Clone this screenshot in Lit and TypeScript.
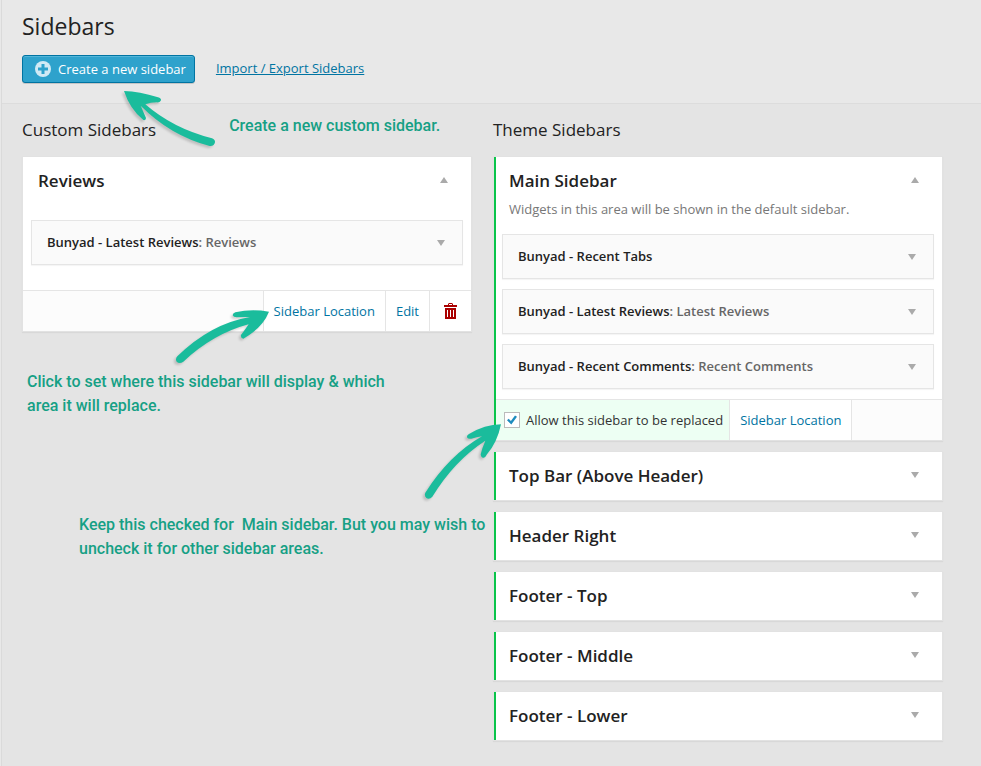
import { LitElement, html, css, svg, nothing } from "lit";
import { customElement, state } from "lit/decorators.js";

interface Widget {
  name: string;
  title?: string;
}

interface Panel {
  id: string;
  title: string;
  custom?: boolean;
  description?: string;
  widgets: Widget[];
}

const customPanels: Panel[] = [
  {
    id: "reviews",
    title: "Reviews",
    custom: true,
    widgets: [{ name: "Bunyad - Latest Reviews", title: "Reviews" }],
  },
];

const themePanels: Panel[] = [
  {
    id: "main",
    title: "Main Sidebar",
    description: "Widgets in this area will be shown in the default sidebar.",
    widgets: [
      { name: "Bunyad - Recent Tabs" },
      { name: "Bunyad - Latest Reviews", title: "Latest Reviews" },
      { name: "Bunyad - Recent Comments", title: "Recent Comments" },
    ],
  },
  { id: "top-bar", title: "Top Bar (Above Header)", widgets: [] },
  { id: "header-right", title: "Header Right", widgets: [] },
  { id: "footer-top", title: "Footer - Top", widgets: [] },
  { id: "footer-middle", title: "Footer - Middle", widgets: [] },
  { id: "footer-lower", title: "Footer - Lower", widgets: [] },
];

const arrowCreate = svg`<path d="M42 33 Q88 34 144 52 Q154 55 153 61 Q151 68 141 67 Q122 67 106 73 Q190 146 306 175 Q316 179 315 187 Q313 199 299 198 Q180 166 92 77 Q98 90 108 114 Q108 122 100 120 Q60 88 42 33Z"/>`;
const arrowLocation = svg`<path d="M297 80 Q244 71 196 82 Q188 85 188 91 Q190 97 200 97 Q222 95 240 96 Q122 116 22 214 Q15 222 20 230 Q28 238 40 230 Q130 146 236 118 Q224 136 213 150 Q211 160 220 161 Q278 128 297 80Z"/>`;
const arrowAllow = svg`<path d="M273 88 Q224 89 177 117 Q170 121 171 127 Q174 133 184 131 Q200 126 216 124 Q118 180 46 293 Q42 302 49 309 Q58 315 67 305 Q134 196 226 137 Q216 160 212 178 Q213 189 221 188 Q227 187 231 178 Q262 142 273 88Z"/>`;

@customElement("app-root")
export class AppRoot extends LitElement {
  @state() private open: Set<string> = new Set(["reviews", "main"]);

  static styles = css`
    :host {
      display: block;
      border-left: 1px solid #e8e8e8;
      color: #222;
      font: 13px/20px "Open Sans", sans-serif;
    }
    * {
      box-sizing: border-box;
    }
    h1,
    h2,
    h3,
    p {
      margin: 0;
    }
    a {
      color: #0074a2;
      text-decoration: none;
    }
    button {
      font: inherit;
      cursor: pointer;
    }
    .page {
      min-height: 100vh;
      border-left: 1px solid #dadada;
      background: #e4e4e4;
    }
    .header {
      padding: 10px 38px 20px 20px;
      background: #e8e8e8;
      border-bottom: 1px solid #dcdcdc;
    }
    .page-title {
      font-size: 23px;
      line-height: 32px;
      font-weight: 400;
    }
    .actions {
      display: flex;
      align-items: center;
      gap: 21px;
      margin-top: 13px;
    }
    .create {
      display: flex;
      align-items: center;
      gap: 7px;
      height: 28px;
      padding: 0 8px 0 12px;
      border: 1px solid #0074a2;
      border-radius: 3px;
      background: #2ea2cc;
      color: #fff;
      box-shadow: inset 0 1px 0 rgba(120, 200, 230, 0.5), 0 1px 0 rgba(0, 0, 0, 0.15);
    }
    .create svg {
      width: 16px;
      height: 16px;
    }
    .import {
      padding-bottom: 2px;
      text-decoration: underline;
    }
    .columns {
      display: grid;
      grid-template-columns: 1fr 1fr;
      gap: 21px;
      padding: 14px 38px 24px 20px;
    }
    .column {
      position: relative;
      min-width: 0;
    }
    .column-head {
      display: flex;
      gap: 73px;
      margin-bottom: 14px;
    }
    .column-title {
      font-size: 17px;
      line-height: 24px;
      font-weight: 400;
      white-space: nowrap;
    }
    .panels {
      display: flex;
      flex-direction: column;
      gap: 10px;
    }
    .panel {
      position: relative;
      border: 1px solid #e2e2e2;
      background: #fff;
      box-shadow: 0 1px 1px rgba(0, 0, 0, 0.05);
    }
    .theme::before {
      content: "";
      position: absolute;
      inset: 0 auto 0 0;
      width: 2px;
      background: #0ac44a;
    }
    .panel-head {
      display: grid;
      grid-template-columns: 1fr auto;
      row-gap: 8px;
      padding: 14px 15px;
    }
    .described {
      padding-bottom: 0;
    }
    .panel-title {
      font-size: 17px;
      line-height: 20px;
      font-weight: 600;
    }
    .description {
      grid-column: 1 / -1;
      color: #777;
    }
    .toggle {
      display: flex;
      align-items: center;
      justify-content: center;
      height: 18px;
      width: 24px;
      padding: 0;
      border: 0;
      background: none;
    }
    .toggle svg {
      width: 8px;
      height: 6px;
      fill: #aaa;
    }
    .flip {
      transform: rotate(180deg);
    }
    .panel-body {
      display: flex;
      flex-direction: column;
      gap: 10px;
      padding: 15px 8px 10px;
    }
    .roomy {
      padding-bottom: 25px;
    }
    .widget {
      display: flex;
      align-items: center;
      justify-content: space-between;
      height: 45px;
      padding: 0 9px 0 15px;
      border: 1px solid #e5e5e5;
      background: #fafafa;
      box-shadow: 0 1px 1px rgba(0, 0, 0, 0.04);
      font-weight: 600;
      color: #666;
    }
    .widget-label {
      padding-bottom: 2px;
    }
    .widget-name {
      color: #222;
    }
    .footer {
      display: flex;
      height: 41px;
      border-top: 1px solid #e5e5e5;
      background: #fcfcfc;
    }
    .end {
      justify-content: flex-end;
    }
    .cell {
      display: flex;
      align-items: center;
      padding: 0 10px;
      border: 0 solid #e5e5e5;
      background: #fff;
    }
    .end .cell {
      border-left-width: 1px;
    }
    .start .cell {
      border-right-width: 1px;
    }
    .end .remove {
      padding: 0 14px;
    }
    .remove svg {
      width: 13px;
      height: 16px;
    }
    .start .allow {
      gap: 6px;
      padding-right: 6px;
      background: #edfff3;
      color: #333;
    }
    .check {
      appearance: none;
      display: grid;
      place-items: center;
      width: 16px;
      height: 16px;
      margin: 0;
      border: 1px solid #bbb;
      background: #fff;
    }
    .check:checked::before {
      content: "";
      width: 10px;
      height: 10px;
      background: #1e8cbe;
      clip-path: polygon(0 52%, 17% 37%, 39% 60%, 80% 5%, 100% 18%, 43% 95%);
    }
    .note {
      color: #16a085;
      font: 500 16px/24px Roboto, sans-serif;
      white-space: pre;
    }
    .heading-note {
      margin-top: -4px;
    }
    .notes {
      display: flex;
      flex-direction: column;
      gap: 95px;
      margin-top: 38px;
      padding-left: 5px;
    }
    .indent {
      padding-left: 52px;
    }
    .arrow {
      position: absolute;
      z-index: 2;
      overflow: visible;
      pointer-events: none;
      fill: #1abc9c;
      filter: drop-shadow(-2px 2px 1px rgba(0, 0, 0, 0.16));
    }
    .to-create {
      left: 88px;
      top: -38px;
      width: 120px;
      height: 75px;
    }
    .to-location {
      right: -9px;
      bottom: -39px;
      width: 310px;
      height: 85px;
    }
    .to-allow {
      left: -84px;
      bottom: -65px;
      width: 340px;
      height: 110px;
    }
  `;

  private flip(id: string) {
    const next = new Set(this.open);
    if (!next.delete(id)) next.add(id);
    this.open = next;
  }

  private triangle(up: boolean) {
    return html`<svg class=${up ? "flip" : ""} viewBox="0 0 8 6" aria-hidden="true">
      <path d="M0 0h8L4 6z" />
    </svg>`;
  }

  private widget(w: Widget) {
    return html`<div class="widget">
      <span class="widget-label"><span class="widget-name">${w.name}</span>${w.title ? `: ${w.title}` : nothing}</span>
      <button class="toggle" aria-label="Open ${w.name}">${this.triangle(false)}</button>
    </div>`;
  }

  private footer(p: Panel) {
    if (p.custom) {
      return html`<div class="footer end">
        <a class="cell" href="#location">Sidebar Location</a>
        <a class="cell" href="#edit">Edit</a>
        <a class="cell remove" href="#delete" aria-label="Delete">
          <svg viewBox="0 0 13 16" aria-hidden="true">
            <path d="M4 2V1l1-1h3l1 1v1h4v2H0V2zM5 1v1h3V1z" fill="#a00" fill-rule="evenodd" />
            <path d="M1 5h11v11H1zM3 7v7h1V7zM6 7v7h1V7zM9 7v7h1V7z" fill="#a00" fill-rule="evenodd" />
          </svg>
        </a>
      </div>`;
    }
    return html`<div class="footer start">
      <label class="cell allow">
        <input class="check" type="checkbox" checked />
        Allow this sidebar to be replaced
      </label>
      <a class="cell" href="#location">Sidebar Location</a>
    </div>`;
  }

  private panel(p: Panel) {
    const isOpen = this.open.has(p.id);
    const described = isOpen && p.description;
    return html`<section class="panel ${p.custom ? "" : "theme"}">
      <div class="panel-head ${described ? "described" : ""}">
        <h3 class="panel-title">${p.title}</h3>
        <button
          class="toggle"
          aria-expanded=${isOpen}
          aria-label="Toggle ${p.title}"
          @click=${() => this.flip(p.id)}
        >
          ${this.triangle(isOpen)}
        </button>
        ${described ? html`<p class="description">${p.description}</p>` : nothing}
      </div>
      ${isOpen
        ? html`<div class="panel-body ${p.custom ? "roomy" : ""}">
              ${p.widgets.map((w) => this.widget(w))}
            </div>
            ${this.footer(p)}`
        : nothing}
      ${p.id === "reviews"
        ? html`<svg class="arrow to-location" viewBox="0 0 930 255" aria-hidden="true">${arrowLocation}</svg>`
        : nothing}
      ${p.id === "main"
        ? html`<svg class="arrow to-allow" viewBox="0 0 1020 330" aria-hidden="true">${arrowAllow}</svg>`
        : nothing}
    </section>`;
  }

  render() {
    return html`<div class="page">
      <header class="header">
        <h1 class="page-title">Sidebars</h1>
        <div class="actions">
          <button class="create">
            <svg viewBox="0 0 16 16" aria-hidden="true">
              <circle cx="8" cy="8" r="8" fill="#d0eaf5" />
              <path d="M6.5 3h3v3.5H13v3H9.5V13h-3V9.5H3v-3h3.5z" fill="#2ea2cc" />
            </svg>
            Create a new sidebar
          </button>
          <a class="import" href="#import">Import / Export Sidebars</a>
        </div>
      </header>
      <main class="columns">
        <div class="column">
          <svg class="arrow to-create" viewBox="0 0 360 225" aria-hidden="true">${arrowCreate}</svg>
          <div class="column-head">
            <h2 class="column-title">Custom Sidebars</h2>
            <p class="note heading-note">Create a new custom sidebar.</p>
          </div>
          <div class="panels">${customPanels.map((p) => this.panel(p))}</div>
          <div class="notes">
            <p class="note">${"Click to set where this sidebar will display & which\narea it will replace."}</p>
            <p class="note indent">${"Keep this checked for  Main sidebar. But you may wish to\nuncheck it for other sidebar areas."}</p>
          </div>
        </div>
        <div class="column">
          <div class="column-head">
            <h2 class="column-title">Theme Sidebars</h2>
          </div>
          <div class="panels">${themePanels.map((p) => this.panel(p))}</div>
        </div>
      </main>
    </div>`;
  }
}
